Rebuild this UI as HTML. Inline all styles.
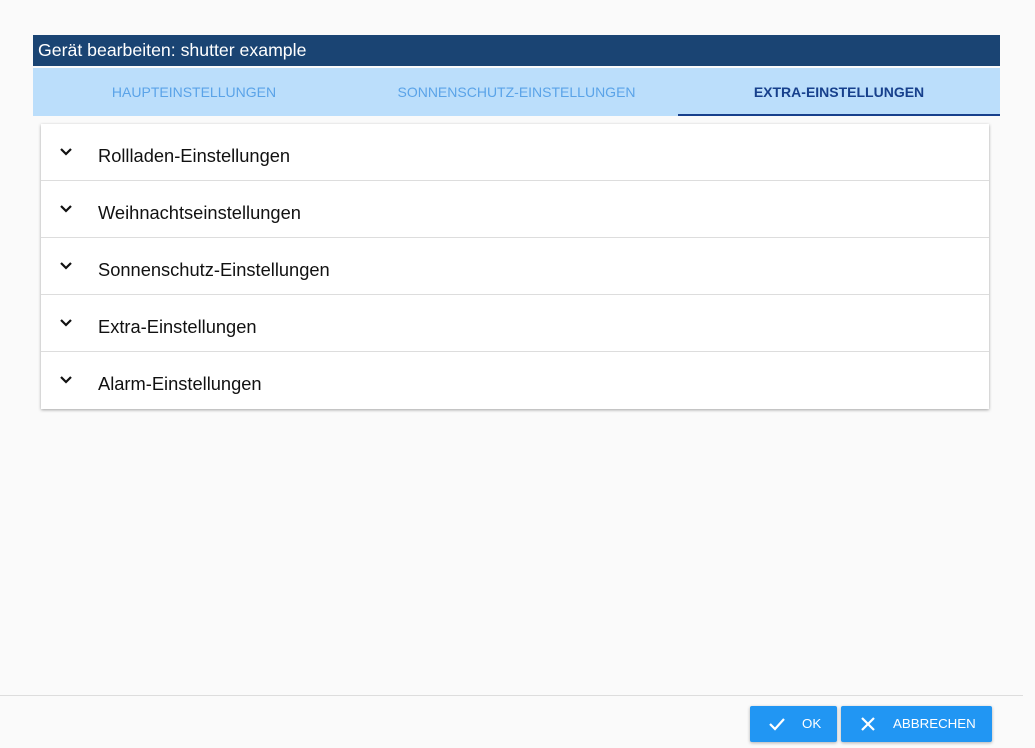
<!DOCTYPE html><html><head><style>
body{margin:0;width:1035px;height:748px;background:#fafafa;font-family:"Liberation Sans",sans-serif;position:relative;overflow:hidden}
.hdr{position:absolute;left:33px;top:35px;width:967px;height:31px;background:#1a4473;color:#fff;font-size:17.7px;line-height:30px;padding-left:5px;box-sizing:border-box}
.tabs{position:absolute;left:33px;top:68px;width:967px;height:48px;background:#bbdefb}
.tab{position:absolute;top:0;height:48px;line-height:48px;font-size:14px;color:#5aa3e8;text-align:center}
.act{color:#17408c;font-weight:bold;border-bottom:2px solid #17408c;box-sizing:border-box}
.card{position:absolute;left:41px;top:124px;width:948px;height:285px;background:#fff;box-shadow:0 1px 3px rgba(0,0,0,.35)}
.row{height:57px;border-bottom:1px solid #ddd;box-sizing:border-box;position:relative;font-size:18.3px;color:#111;line-height:64px;padding-left:57px}
.row:last-child{border-bottom:none}
.row svg{position:absolute;left:18px;top:23px}
.line{position:absolute;left:0;top:695px;width:1023px;height:1px;background:#ddd}
.btn{position:absolute;top:706px;height:36px;background:#2196f3;color:#fff;border-radius:2px;box-shadow:0 1px 3px rgba(0,0,0,.3);font-size:13.3px;line-height:35px}
.btn svg{position:absolute;top:10px}
</style></head><body>
<div class="hdr">Gerät bearbeiten: shutter example</div>
<div class="tabs">
<div class="tab" style="left:0;width:322px">HAUPTEINSTELLUNGEN</div>
<div class="tab" style="left:322px;width:323px">SONNENSCHUTZ-EINSTELLUNGEN</div>
<div class="tab act" style="left:645px;width:322px">EXTRA-EINSTELLUNGEN</div>
</div>
<div class="card">
<div class="row"><svg width="14" height="10"><path d="M2 2l5 5 5-5" stroke="#111" stroke-width="2.2" fill="none"/></svg>Rollladen-Einstellungen</div>
<div class="row"><svg width="14" height="10"><path d="M2 2l5 5 5-5" stroke="#111" stroke-width="2.2" fill="none"/></svg>Weihnachtseinstellungen</div>
<div class="row"><svg width="14" height="10"><path d="M2 2l5 5 5-5" stroke="#111" stroke-width="2.2" fill="none"/></svg>Sonnenschutz-Einstellungen</div>
<div class="row"><svg width="14" height="10"><path d="M2 2l5 5 5-5" stroke="#111" stroke-width="2.2" fill="none"/></svg>Extra-Einstellungen</div>
<div class="row"><svg width="14" height="10"><path d="M2 2l5 5 5-5" stroke="#111" stroke-width="2.2" fill="none"/></svg>Alarm-Einstellungen</div>
</div>
<div class="line"></div>
<div class="btn" style="left:750px;width:87px"><svg style="left:18px" width="18" height="16"><path d="M2 8l5 5 9-10" stroke="#fff" stroke-width="2.2" fill="none"/></svg><span style="position:absolute;left:52px">OK</span></div>
<div class="btn" style="left:841px;width:151px"><svg style="left:19px" width="16" height="16"><path d="M2 2l12 12M14 2L2 14" stroke="#fff" stroke-width="2.2" fill="none"/></svg><span style="position:absolute;left:52px">ABBRECHEN</span></div>
</body></html>
